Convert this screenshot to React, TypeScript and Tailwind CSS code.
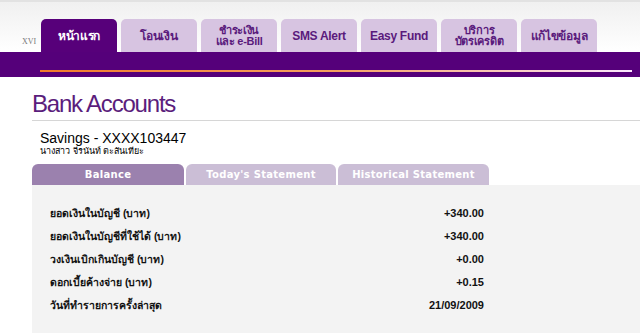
import React from "react";

const tabs: { label: React.ReactNode; active?: boolean }[] = [
  { label: "หน้าแรก", active: true },
  { label: "โอนเงิน" },
  {
    label: (
      <span className="block leading-[11px] text-[11px]">
        ชำระเงิน
        <br />
        และ e-Bill
      </span>
    ),
  },
  { label: "SMS Alert" },
  { label: "Easy Fund" },
  {
    label: (
      <span className="block leading-[11px] text-[11px]">
        บริการ
        <br />
        บัตรเครดิต
      </span>
    ),
  },
  { label: "แก้ไขข้อมูล" },
];

const rows = [
  ["ยอดเงินในบัญชี (บาท)", "+340.00"],
  ["ยอดเงินในบัญชีที่ใช้ได้ (บาท)", "+340.00"],
  ["วงเงินเบิกเกินบัญชี (บาท)", "+0.00"],
  ["ดอกเบี้ยค้างจ่าย (บาท)", "+0.15"],
  ["วันที่ทำรายการครั้งล่าสุด", "21/09/2009"],
];

export default function App() {
  return (
    <div
      className="w-[640px] h-[333px] overflow-hidden bg-white"
      style={{ fontFamily: '"Liberation Sans", Arial, sans-serif' }}
    >
      {/* header */}
      <div className="h-[2px] bg-[#e2e2e2]" />
      <div className="h-[50px] bg-gradient-to-b from-[#f0f0f0] to-white flex items-end pl-[22px]">
        <span
          className="w-[19px] mb-[4px] text-[8px] text-[#777]"
          style={{ fontFamily: '"Liberation Serif", serif' }}
        >
          XVI
        </span>
        <div className="flex gap-[4px]">
          {tabs.map((t, i) => (
            <div
              key={i}
              className={
                "w-[76px] h-[33px] rounded-t-[5px] flex items-center justify-center text-center font-bold text-[12px] tracking-[-0.3px] " +
                (t.active
                  ? "bg-[#57007a] text-white"
                  : "bg-[#d7c4e1] text-[#5a1a7c]")
              }
            >
              {t.label}
            </div>
          ))}
        </div>
      </div>
      <div className="h-[25px] bg-[#55007a] pt-[18px] pl-[40px] pr-[8px]">
        <div className="h-[2px] bg-gradient-to-r from-[#f07a2a] via-[#f5a060] to-[#fbe8ff]" />
      </div>

      {/* main */}
      <div className="pl-[32px]">
        <h1 className="mt-[13px] text-[24px] leading-[28px] text-[#5b1d7c] tracking-[-1.2px]">
          Bank Accounts
        </h1>
        <div className="mt-[2px] h-[1px] bg-[#d6d6d6]" />
        <div className="pl-[8px] mt-[9px]">
          <div className="text-[14px] leading-[16px] text-black">
            Savings - XXXX103447
          </div>
          <div className="text-[9px] leading-[11px] text-black">
            นางสาว จีรนันท์ ตะสันเทียะ
          </div>
        </div>
        <div
          className="mt-[7px] flex gap-[2px]"
          style={{ fontFamily: '"DejaVu Sans", Verdana, sans-serif' }}
        >
          <div className="w-[152px] h-[21px] rounded-t-[6px] bg-[#9b81ae] text-white font-bold text-[10px] flex items-center justify-center tracking-[0.3px]">
            Balance
          </div>
          <div className="w-[150px] h-[21px] rounded-t-[6px] bg-[#cbbed6] text-white font-bold text-[10px] flex items-center justify-center tracking-[0.3px]">
            Today's Statement
          </div>
          <div className="w-[151px] h-[21px] rounded-t-[6px] bg-[#cbbed6] text-white font-bold text-[10px] flex items-center justify-center tracking-[0.3px]">
            Historical Statement
          </div>
        </div>
        <div className="bg-[#f3f3f3] h-[160px] pt-[17px]">
          <div className="w-[452px] pl-[18px]">
            {rows.map(([l, v], i) => (
              <div key={i} className="h-[23px] flex items-center">
                <span className="flex-1 text-[10.5px] font-bold text-[#111]">
                  {l}
                </span>
                <span className="text-[11px] font-bold text-[#111]">{v}</span>
              </div>
            ))}
          </div>
        </div>
      </div>
    </div>
  );
}
